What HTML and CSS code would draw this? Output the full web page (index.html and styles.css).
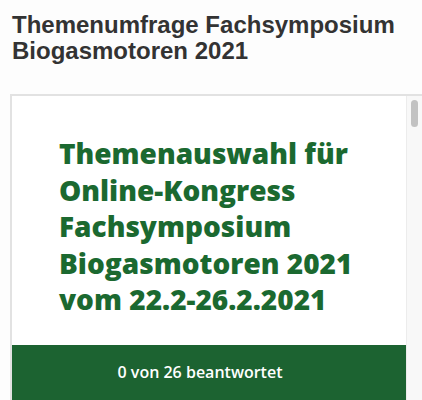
FILE: index.html
```html
<!DOCTYPE html>
<html lang="de">
<head>
    <meta charset="UTF-8">
    <meta name="viewport" content="width=device-width, initial-scale=1.0">
    <title>Themenumfrage Fachsymposium Biogasmotoren 2021</title>
    <link rel="stylesheet" href="styles.css">
</head>
<body>

    <h1 class="page-title">Themenumfrage Fachsymposium Biogasmotoren 2021</h1>

    <!-- Embedded survey frame -->
    <div class="survey-frame">
        <div class="survey-content">
            <h2 class="survey-title">Themenauswahl für Online-Kongress Fachsymposium Biogasmotoren 2021 vom 22.2-26.2.2021</h2>
            <div class="progress-bar">0 von 26 beantwortet</div>
        </div>
        <div class="scrollbar">
            <div class="scroll-thumb"></div>
        </div>
    </div>

</body>
</html>
```

FILE: styles.css
```css
html, body {
    margin: 0;
    height: 100%;
    overflow: hidden;
}

body {
    padding: 12px 0 0 0;
    box-sizing: border-box;
    background-color: #fdfdfd;
    font-family: "Liberation Sans", Arial, sans-serif;
}

/* Page heading */
.page-title {
    margin: 0 0 30px 12px;
    color: #333;
    font-size: 24px;
    line-height: 26px;
    font-weight: bold;
}

/* Survey frame */
.survey-frame {
    display: flex;
    margin-left: 10px;
    width: 430px;
    height: 320px;
    border-top: 2px solid #e2e2e2;
    border-left: 2px solid #e2e2e2;
    background: #fff;
}

.survey-content {
    width: 394px;
    flex-shrink: 0;
    padding-top: 39px;
}

.survey-title {
    margin: 0 0 27px 0;
    padding: 0 30px 0 47px;
    color: #1b6930;
    font-family: "Open Sans", sans-serif;
    font-size: 28px;
    line-height: 36.5px;
    font-weight: 800;
}

.progress-bar {
    height: 60px;
    padding: 16px 18px 0 0;
    box-sizing: border-box;
    background-color: #1c6331;
    color: #fff;
    font-family: "Open Sans", sans-serif;
    font-size: 16px;
    font-weight: 600;
    text-align: center;
}

/* Fake scrollbar */
.scrollbar {
    width: 16px;
    background-color: #f8f8f8;
    border-left: 1px solid #ececec;
}

.scroll-thumb {
    width: 7px;
    height: 27px;
    margin: 4px 0 0 4px;
    border-radius: 4px;
    background-color: #c2c2c2;
}
```
